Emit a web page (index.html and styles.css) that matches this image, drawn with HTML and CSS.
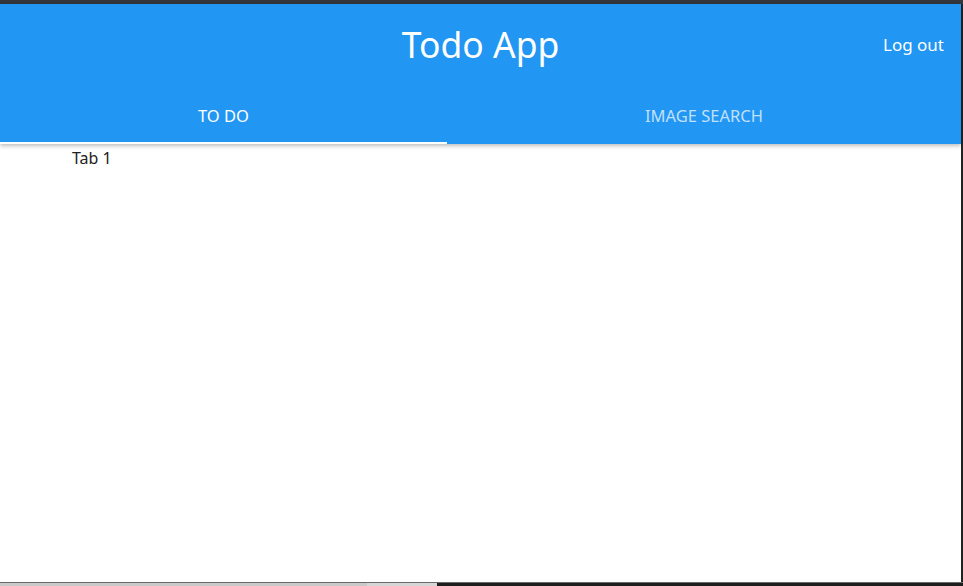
FILE: index.html
```html
<!DOCTYPE html>
<html lang="en">
<head>
    <meta charset="UTF-8">
    <meta name="viewport" content="width=device-width, initial-scale=1.0">
    <title>Todo App</title>
    <link rel="stylesheet" href="styles.css">
</head>
<body>

<div class="window-top"></div>
<div class="window-middle">
    <div class="app">
        <header class="app-header">
            <div class="title-row">
                <h1 class="app-title">Todo App</h1>
                <button class="logout-button">Log out</button>
            </div>
            <nav class="tabs">
                <div class="tab active">TO DO</div>
                <div class="tab">IMAGE SEARCH</div>
            </nav>
        </header>
        <div class="tab-content">Tab 1</div>
    </div>
    <div class="window-edge"></div>
</div>
<div class="window-bottom">
    <div class="taskbar-left"></div>
    <div class="taskbar-mid"></div>
    <div class="taskbar-right"></div>
</div>

</body>
</html>
```

FILE: styles.css
```css
body {
    font-family: 'Noto Sans', 'Open Sans', sans-serif;
    margin: 0;
    padding: 0;
    height: 586px;
    display: flex;
    flex-direction: column;
    overflow: hidden;
    background-color: #fff;
}

.window-top {
    height: 4px;
    background-color: #33363b;
    flex-shrink: 0;
}

.window-middle {
    flex: 1;
    display: flex;
    min-height: 0;
}

.app {
    flex: 1;
    display: flex;
    flex-direction: column;
    background-color: #fff;
}

.window-edge {
    width: 2px;
    background-color: #232323;
}

.app-header {
    background-color: #2196f3;
    color: #fff;
    box-shadow: 0 2px 4px rgba(0, 0, 0, 0.25);
    position: relative;
    z-index: 1;
}

.title-row {
    height: 84px;
    display: flex;
    align-items: center;
    justify-content: center;
    position: relative;
}

.app-title {
    margin: 0;
    font-size: 35.5px;
    font-weight: 400;
    line-height: 1;
    margin-top: -2px;
}

.logout-button {
    position: absolute;
    right: 17px;
    top: 29px;
    background: none;
    border: none;
    color: #fff;
    font-family: inherit;
    font-size: 17px;
    padding: 0;
    cursor: pointer;
}

.tabs {
    display: flex;
    height: 56px;
}

.tab {
    display: flex;
    align-items: center;
    justify-content: center;
    font-size: 16.5px;
    color: rgba(255, 255, 255, 0.72);
    box-sizing: border-box;
    padding-bottom: 2px;
}

.tab:first-child {
    width: 447px;
}

.tab:last-child {
    flex: 1;
}

.tab.active {
    color: #fff;
    border-bottom: 2px solid #fff;
    padding-bottom: 0;
}

.tab-content {
    padding: 2px 72px;
    font-size: 16px;
    line-height: 24px;
    color: #222;
}

.window-bottom {
    height: 3px;
    display: flex;
    border-top: 1px solid #6a6a6a;
    flex-shrink: 0;
}

.taskbar-left {
    width: 367px;
    background-color: #c9c9c9;
}

.taskbar-mid {
    width: 70px;
    background-color: #d6d6d6;
}

.taskbar-right {
    flex: 1;
    background-color: #1e1e1e;
}
```
